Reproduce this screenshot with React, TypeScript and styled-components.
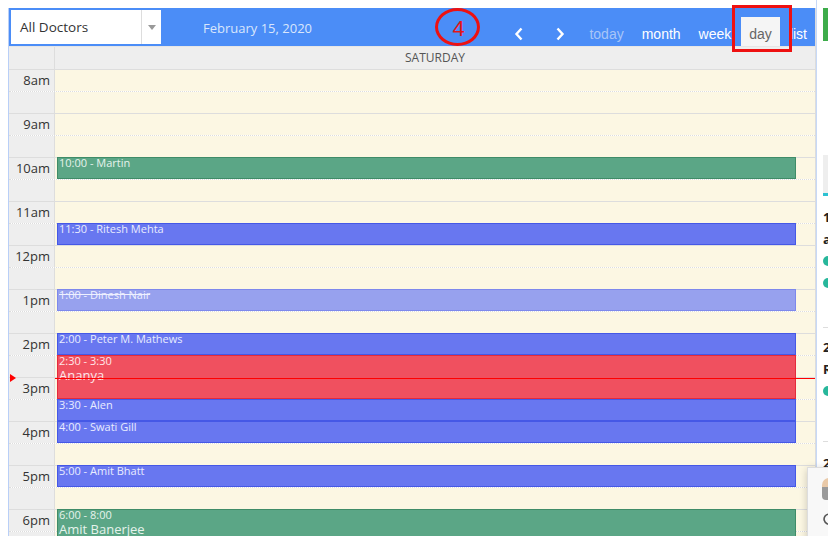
import React from "react";
import styled, { createGlobalStyle, css } from "styled-components";

const GlobalStyle = createGlobalStyle`
  html, body {
    margin: 0;
    padding: 0;
    background: #fff;
    overflow: hidden;
  }
  body {
    font-family: "Open Sans", "Liberation Sans", sans-serif;
  }
`;

type Tone = "green" | "blue" | "faded" | "red";

const TONES: Record<Tone, { bg: string; border: string; text: string }> = {
  green: { bg: "#5ba686", border: "#3f8c68", text: "#e6f3ec" },
  blue: { bg: "#6877f0", border: "#4558e6", text: "#e9ecff" },
  faded: { bg: "#97a1ee", border: "#7d88ec", text: "#eef0ff" },
  red: { bg: "#f0505f", border: "#e52a3c", text: "#ffe6e9" },
};

const SLOT = 22;

const HOURS = ["8am", "9am", "10am", "11am", "12pm", "1pm", "2pm", "3pm", "4pm", "5pm", "6pm", "7pm"];

const EVENTS: { slot: number; len: number; tone: Tone; time: string; title?: string; cancelled?: boolean }[] = [
  { slot: 4, len: 1, tone: "green", time: "10:00 - Martin" },
  { slot: 7, len: 1, tone: "blue", time: "11:30 - Ritesh Mehta" },
  { slot: 10, len: 1, tone: "faded", time: "1:00 - Dinesh Nair", cancelled: true },
  { slot: 12, len: 1, tone: "blue", time: "2:00 - Peter M. Mathews" },
  { slot: 13, len: 2, tone: "red", time: "2:30 - 3:30", title: "Ananya" },
  { slot: 15, len: 1, tone: "blue", time: "3:30 - Alen" },
  { slot: 16, len: 1, tone: "blue", time: "4:00 - Swati Gill" },
  { slot: 18, len: 1, tone: "blue", time: "5:00 - Amit Bhatt" },
  { slot: 20, len: 4, tone: "green", time: "6:00 - 8:00", title: "Amit Banerjee" },
];

const Page = styled.div`
  display: flex;
  padding: 8px 0 0 8px;
  height: 536px;
  box-sizing: border-box;
  overflow: hidden;
`;

const Calendar = styled.div`
  width: 808px;
  flex: none;
  border-left: 1px solid #b9cff7;
  border-right: 1px solid #dcdcdc;
  box-sizing: border-box;
`;

const Toolbar = styled.div`
  position: relative;
  z-index: 3;
  height: 39px;
  background: #4b8df7;
  display: flex;
  align-items: flex-start;
  padding: 2px 0 0 2px;
  box-sizing: border-box;
  border-bottom: 1px solid #e6e6e6;
`;

const Select = styled.div`
  width: 150px;
  height: 34px;
  background: #fff;
  display: flex;
  align-items: center;
  box-sizing: border-box;
  flex: none;
`;

const SelectText = styled.span`
  flex: 1;
  padding-left: 9px;
  font-size: 13.5px;
  color: #333;
`;

const SelectArrow = styled.span`
  width: 19px;
  height: 34px;
  border-left: 1px solid #ddd;
  display: flex;
  align-items: center;
  justify-content: center;
  &::after {
    content: "";
    border-left: 4px solid transparent;
    border-right: 4px solid transparent;
    border-top: 5px solid #999;
  }
`;

const DateTitle = styled.span`
  margin: 9px 0 0 42px;
  font-size: 13px;
  color: #d9e6fc;
`;

const Nav = styled.div`
  margin-left: auto;
  display: flex;
  align-items: flex-end;
  align-self: flex-end;
  gap: 2px;
`;

const Chevron = styled.button`
  width: 39px;
  height: 29px;
  border: 0;
  padding: 0;
  background: transparent;
  display: flex;
  align-items: center;
  justify-content: center;
  padding-top: 5px;
`;

const ViewButton = styled.button<{ $active?: boolean; $disabled?: boolean }>`
  height: 29px;
  border: 0;
  padding: 5px 8px 0;
  background: ${(p) => (p.$active ? "#f5f5f5" : "transparent")};
  color: ${(p) => (p.$active ? "#666" : p.$disabled ? "#a7c5f7" : "#fff")};
  font-family: "Liberation Sans", Arial, sans-serif;
  font-size: 14px;
  line-height: 24px;
`;

const CircleMark = styled.div`
  position: absolute;
  left: 426px;
  top: 0;
  width: 45px;
  height: 38px;
  border: 3px solid #ee1111;
  border-radius: 50%;
  box-sizing: border-box;
  display: flex;
  align-items: center;
  justify-content: center;
  color: #e51515;
  font-family: "Liberation Sans", Arial, sans-serif;
  font-size: 22px;
  padding: 3px 0 0 2px;
`;

const BoxMark = styled.div`
  position: absolute;
  left: 723px;
  top: -3px;
  width: 60px;
  height: 47px;
  border: 3px solid #ee1111;
  box-sizing: border-box;
`;

const Row = styled.div`
  display: grid;
  grid-template-columns: 46px 1fr;
`;

const HeaderRow = styled(Row)`
  height: 23px;
  border-bottom: 1px solid #ddd;
  box-sizing: border-box;
  background: #eee;
`;

const AxisCell = styled.div`
  background: #eee;
  border-right: 1px solid #ddd;
  text-align: right;
  padding-right: 4px;
  font-size: 13px;
  color: #333;
  line-height: 21px;
`;

const DayHead = styled.div`
  text-align: center;
  font-size: 12px;
  color: #555;
  line-height: 22px;
`;

const Body = styled.div`
  position: relative;
`;

const SlotRow = styled(Row)<{ $half: boolean }>`
  height: ${SLOT}px;
  box-sizing: border-box;
  border-bottom: 1px ${(p) => (p.$half ? "solid" : "dotted")} #ddd;
`;

const DayCell = styled.div`
  background: #fcf7e3;
`;

const EventLayer = styled.div`
  position: absolute;
  top: 0;
  bottom: 0;
  left: 48px;
  right: 19px;
  z-index: 1;
`;

const EventBox = styled.div<{ $tone: Tone; $cancelled?: boolean }>`
  position: absolute;
  left: 0;
  right: 0;
  box-sizing: border-box;
  padding: 0 1px;
  overflow: hidden;
  ${(p) => css`
    background: ${TONES[p.$tone].bg};
    border: 1px solid ${TONES[p.$tone].border};
    color: ${TONES[p.$tone].text};
  `}
  ${(p) => p.$cancelled && css`text-decoration: line-through;`}
`;

const EventTime = styled.div`
  font-size: 11px;
  line-height: 11px;
  margin-top: -1px;
`;

const EventTitle = styled.div`
  font-size: 13px;
  line-height: 15px;
  margin-top: 2px;
`;

const NowLine = styled.div`
  position: absolute;
  left: 46px;
  right: 0;
  top: 308px;
  height: 1px;
  background-color: #ff0000;
  z-index: 2;
`;

const NowArrow = styled.div`
  position: absolute;
  left: 1px;
  top: 304px;
  width: 0;
  height: 0;
  border-left: 6px solid #ff0000;
  border-top: 4px solid transparent;
  border-bottom: 4px solid transparent;
  z-index: 2;
`;

const SidePanel = styled.div`
  position: relative;
  width: 300px;
  flex: none;
  border-left: 1px solid #c7d9f7;
  padding-left: 6px;
  margin-top: -8px;
  padding-top: 8px;
  display: flex;
  flex-direction: column;
`;

const GreenButton = styled.div`
  width: 90px;
  height: 33px;
  background: #3dac4a;
`;

const TabBox = styled.div`
  margin-top: 114px;
  height: 41px;
  background: #eee;
  border-bottom: 3px solid #2cc1d2;
  box-sizing: border-box;
`;

const Entry = styled.div<{ $top: number; $bottom: number }>`
  padding: ${(p) => p.$top}px 0 ${(p) => p.$bottom}px;
  border-bottom: 1px solid #ddd;
  display: flex;
  flex-direction: column;
`;

const EntryLine = styled.div`
  height: 22px;
  display: flex;
  align-items: center;
  font-size: 13px;
  font-weight: 700;
  color: #222;
`;

const Dot = styled.span`
  width: 10px;
  height: 10px;
  border-radius: 50%;
  background: #27b79b;
`;

const Popup = styled.div`
  position: absolute;
  left: -10px;
  top: 467px;
  width: 180px;
  height: 120px;
  background: #f8f8f8;
  border: 1px solid #ddd;
  box-shadow: 0 2px 8px rgba(0, 0, 0, 0.2);
  padding: 10px 14px;
  box-sizing: border-box;
  display: flex;
  flex-direction: column;
  gap: 12px;
`;

const Avatar = styled.span`
  width: 14px;
  height: 22px;
  border-radius: 7px 7px 4px 4px;
  background: linear-gradient(#e9c9a8 40%, #9a9a9a 40%);
`;

const slotLabel = (i: number) => (i % 2 === 0 ? HOURS[i / 2] : "");

export default function App() {
  const slots = Array.from({ length: HOURS.length * 2 }, (_, i) => i);
  return (
    <>
      <GlobalStyle />
      <Page>
        <Calendar>
          <Toolbar>
            <Select>
              <SelectText>All Doctors</SelectText>
              <SelectArrow />
            </Select>
            <DateTitle>February 15, 2020</DateTitle>
            <Nav>
              <Chevron aria-label="prev">
                <svg width="10" height="14" viewBox="0 0 10 14">
                  <path d="M7.5 1.5 L2.5 7 L7.5 12.5" stroke="#fff" strokeWidth="2.4" fill="none" />
                </svg>
              </Chevron>
              <Chevron aria-label="next">
                <svg width="10" height="14" viewBox="0 0 10 14">
                  <path d="M2.5 1.5 L7.5 7 L2.5 12.5" stroke="#fff" strokeWidth="2.4" fill="none" />
                </svg>
              </Chevron>
              <ViewButton $disabled>today</ViewButton>
              <ViewButton>month</ViewButton>
              <ViewButton>week</ViewButton>
              <ViewButton $active>day</ViewButton>
              <ViewButton>list</ViewButton>
            </Nav>
            <CircleMark>4</CircleMark>
            <BoxMark />
          </Toolbar>

          <HeaderRow>
            <AxisCell />
            <DayHead>SATURDAY</DayHead>
          </HeaderRow>

          <Body>
            {slots.map((i) => (
              <SlotRow key={i} $half={i % 2 === 1}>
                <AxisCell>{slotLabel(i)}</AxisCell>
                <DayCell />
              </SlotRow>
            ))}
            <EventLayer>
              {EVENTS.map((ev, idx) => (
                <EventBox
                  key={idx}
                  $tone={ev.tone}
                  $cancelled={ev.cancelled}
                  style={{ top: ev.slot * SLOT - 1, height: ev.len * SLOT }}
                >
                  <EventTime>{ev.time}</EventTime>
                  {ev.title && <EventTitle>{ev.title}</EventTitle>}
                </EventBox>
              ))}
            </EventLayer>
            <NowArrow />
            <NowLine />
          </Body>
        </Calendar>

        <SidePanel>
          <GreenButton />
          <TabBox />
          <Entry $top={10} $bottom={33}>
            <EntryLine>10:00 AM</EntryLine>
            <EntryLine>amit</EntryLine>
            <EntryLine><Dot /></EntryLine>
            <EntryLine><Dot /></EntryLine>
          </Entry>
          <Entry $top={8} $bottom={39}>
            <EntryLine>2:00 PM</EntryLine>
            <EntryLine>Ritesh</EntryLine>
            <EntryLine><Dot /></EntryLine>
          </Entry>
          <Entry $top={10} $bottom={20}>
            <EntryLine>2:30 PM</EntryLine>
          </Entry>
          <Popup>
            <Avatar />
            <svg width="14" height="14" viewBox="0 0 14 14">
              <path d="M11 4 A5 5 0 1 0 12 8" stroke="#555" strokeWidth="1.6" fill="none" />
            </svg>
          </Popup>
        </SidePanel>
      </Page>
    </>
  );
}
